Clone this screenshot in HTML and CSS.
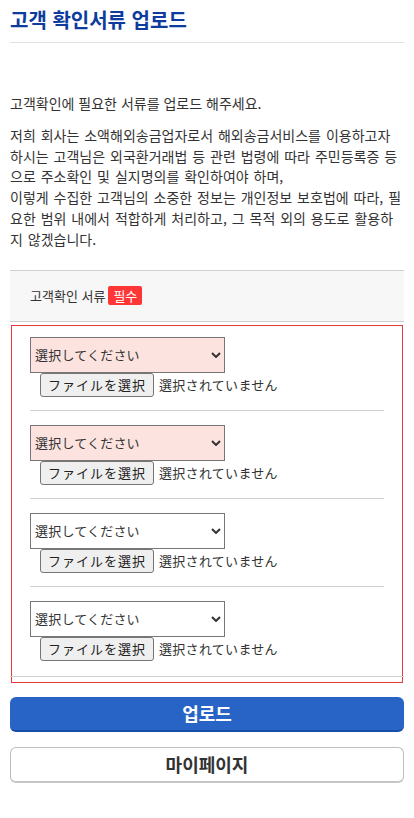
FILE: index.html
```html
<!DOCTYPE html>
<html lang="ko">
<head>
<meta charset="utf-8">
<title>고객 확인서류 업로드</title>
<link rel="stylesheet" href="styles.css">
</head>
<body>
<div class="page">
  <header class="page-head">
    <h1 class="page-title">고객 확인서류 업로드</h1>
  </header>

  <div class="intro">
    <p class="intro-lead">고객확인에 필요한 서류를 업로드 해주세요.</p>
    <p class="intro-body">저희 회사는 소액해외송금업자로서 해외송금서비스를 이용하고자 하시는 고객님은 외국환거래법 등 관련 법령에 따라 주민등록증 등으로 주소확인 및 실지명의를 확인하여야 하며,<br>이렇게 수집한 고객님의 소중한 정보는 개인정보 보호법에 따라, 필요한 범위 내에서 적합하게 처리하고, 그 목적 외의 용도로 활용하지 않겠습니다.</p>
  </div>

  <section class="doc-section">
    <div class="doc-head">
      <span class="doc-label">고객확인 서류</span>
      <span class="badge">필수</span>
    </div>
    <div class="doc-box">
      <div class="doc-item">
        <div class="select-wrap is-required">
          <select class="doc-select"><option>選択してください</option></select>
          <svg class="chev" viewBox="0 0 10 6" width="10" height="6"><path d="M1 1 L5 5 L9 1" fill="none" stroke="#333" stroke-width="2"/></svg>
        </div>
        <div class="file-row"><button class="file-btn" type="button">ファイルを選択</button><span class="file-name">選択されていません</span></div>
      </div>
      <div class="doc-item">
        <div class="select-wrap is-required">
          <select class="doc-select"><option>選択してください</option></select>
          <svg class="chev" viewBox="0 0 10 6" width="10" height="6"><path d="M1 1 L5 5 L9 1" fill="none" stroke="#333" stroke-width="2"/></svg>
        </div>
        <div class="file-row"><button class="file-btn" type="button">ファイルを選択</button><span class="file-name">選択されていません</span></div>
      </div>
      <div class="doc-item">
        <div class="select-wrap">
          <select class="doc-select"><option>選択してください</option></select>
          <svg class="chev" viewBox="0 0 10 6" width="10" height="6"><path d="M1 1 L5 5 L9 1" fill="none" stroke="#333" stroke-width="2"/></svg>
        </div>
        <div class="file-row"><button class="file-btn" type="button">ファイルを選択</button><span class="file-name">選択されていません</span></div>
      </div>
      <div class="doc-item doc-item-last">
        <div class="select-wrap">
          <select class="doc-select"><option>選択してください</option></select>
          <svg class="chev" viewBox="0 0 10 6" width="10" height="6"><path d="M1 1 L5 5 L9 1" fill="none" stroke="#333" stroke-width="2"/></svg>
        </div>
        <div class="file-row"><button class="file-btn" type="button">ファイルを選択</button><span class="file-name">選択されていません</span></div>
      </div>
      <div class="doc-end"></div>
    </div>
  </section>

  <div class="actions">
    <button class="btn btn-primary" type="button">업로드</button>
    <button class="btn btn-secondary" type="button">마이페이지</button>
  </div>
</div>
</body>
</html>
```

FILE: styles.css
```css
html, body {
  margin: 0;
  padding: 0;
  background: #fff;
}
body {
  font-family: "Noto Sans CJK KR", "Noto Sans", sans-serif;
  color: #333;
}
.page {
  padding: 0 10px;
}
.page-head {
  padding: 6px 0 8px;
  border-bottom: 1px solid #e1e1e1;
}
.page-title {
  margin: 0;
  font-size: 20px;
  line-height: 28px;
  font-weight: 700;
  color: #0d3c9e;
}
.intro {
  margin-top: 50px;
}
.intro p {
  margin: 0;
  font-size: 14px;
  line-height: 20.8px;
  color: #333;
}
.intro .intro-body {
  margin-top: 11px;
  word-spacing: 1px;
}
.doc-section {
  margin-top: 20px;
}
.doc-head {
  height: 50px;
  display: flex;
  align-items: center;
  padding-left: 20px;
  background: #f7f7f7;
  border-top: 1px solid #cfcfcf;
  border-bottom: 1px solid #cfcfcf;
  font-size: 13px;
  color: #333;
}
.badge {
  margin-left: 3px;
  padding: 0 5px;
  height: 19px;
  line-height: 19px;
  background: #ff3636;
  color: #fff;
  border-radius: 2px;
  font-size: 13px;
}
.doc-box {
  margin: 3px 1px 0;
  border: 1px solid #e8393b;
  padding: 11px 0 5px;
}
.doc-item {
  margin: 0 18px 14px;
  padding-bottom: 13px;
  border-bottom: 1px solid #d0d0d0;
}
.doc-item.doc-item-last {
  margin-bottom: 0;
  padding-bottom: 0;
  border-bottom: none;
}
.doc-end {
  margin: 15px -2px 0;
  border-top: 1px solid #d0d0d0;
}
.select-wrap {
  position: relative;
  width: 195px;
  height: 36px;
}
.doc-select {
  -webkit-appearance: none;
  appearance: none;
  display: block;
  width: 100%;
  height: 100%;
  margin: 0;
  padding: 0 0 0 4px;
  border: 1px solid #767676;
  border-radius: 0;
  background: #fff;
  color: #333;
  font-family: "Noto Sans CJK JP", sans-serif;
  font-size: 13px;
  letter-spacing: 0.2px;
}
.is-required .doc-select {
  background: #fde3df;
}
.chev {
  position: absolute;
  right: 4px;
  top: 15px;
  pointer-events: none;
}
.file-row {
  display: flex;
  align-items: center;
  height: 24px;
  padding-left: 10px;
}
.file-btn {
  width: 114px;
  height: 24px;
  margin: 0;
  padding: 0;
  border: 1px solid #767676;
  border-radius: 3px;
  background: #efefef;
  color: #222;
  font-family: "Noto Sans CJK JP", sans-serif;
  font-size: 13px;
  line-height: 22px;
  letter-spacing: 1px;
}
.file-name {
  margin-left: 5px;
  font-family: "Noto Sans CJK JP", sans-serif;
  font-size: 13px;
  letter-spacing: 0.3px;
  color: #333;
}
.actions {
  margin-top: 14px;
  display: flex;
  flex-direction: column;
  gap: 15px;
}
.btn {
  display: block;
  width: 100%;
  margin: 0;
  padding: 0;
  font-family: "Noto Sans CJK KR", sans-serif;
  font-weight: 700;
  font-size: 18px;
  border-radius: 6px;
  cursor: pointer;
}
.btn-primary {
  height: 35px;
  background: #2864c5;
  color: #fff;
  border: none;
  border-bottom: 2px solid #1a4ea6;
}
.btn-secondary {
  height: 36px;
  background: #fff;
  color: #333;
  border: 1px solid #bdbdbd;
  border-bottom: 2px solid #c6c6c6;
}
```
